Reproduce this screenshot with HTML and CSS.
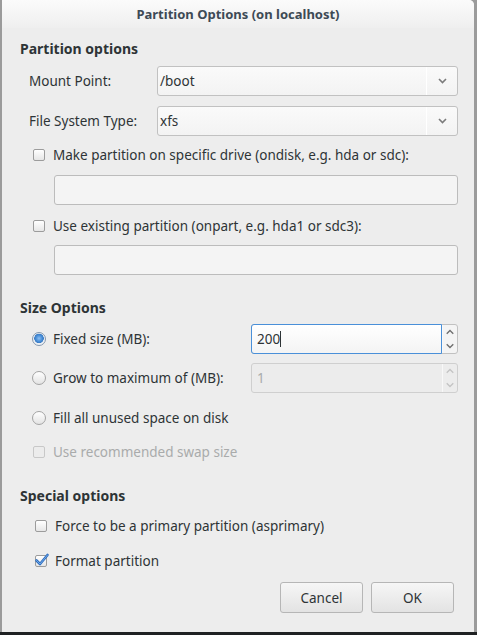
FILE: index.html
```html
<!DOCTYPE html>
<html lang="en">
<head>
    <meta charset="UTF-8">
    <meta name="viewport" content="width=device-width, initial-scale=1.0">
    <title>Partition Options</title>
    <link rel="stylesheet" href="styles.css">
</head>
<body>
    <div class="dialog">
        <div class="titlebar">Partition Options (on localhost)</div>

        <div class="content">
            <h2 class="section-title">Partition options</h2>

            <div class="field-row">
                <span class="field-label">Mount Point:</span>
                <div class="combo">
                    <span class="combo-text">/boot</span>
                    <span class="combo-button">
                        <svg width="9" height="6" viewBox="0 0 9 6"><path d="M1 1 L4.5 4.5 L8 1" fill="none" stroke="#7b7b7b" stroke-width="1.6"/></svg>
                    </span>
                </div>
            </div>

            <div class="field-row spaced">
                <span class="field-label">File System Type:</span>
                <div class="combo">
                    <span class="combo-text">xfs</span>
                    <span class="combo-button">
                        <svg width="9" height="6" viewBox="0 0 9 6"><path d="M1 1 L4.5 4.5 L8 1" fill="none" stroke="#7b7b7b" stroke-width="1.6"/></svg>
                    </span>
                </div>
            </div>

            <div class="check-row drive-check">
                <span class="checkbox"></span>
                <span>Make partition on specific drive (ondisk, e.g. hda or sdc):</span>
            </div>
            <div class="entry indented drive-entry"></div>

            <div class="check-row part-check">
                <span class="checkbox"></span>
                <span>Use existing partition (onpart, e.g. hda1 or sdc3):</span>
            </div>
            <div class="entry indented part-entry"></div>

            <h2 class="section-title size-title">Size Options</h2>

            <div class="option-row fixed-row">
                <div class="option-choice">
                    <span class="radio checked"></span>
                    <span>Fixed size (MB):</span>
                </div>
                <div class="spin focused">
                    <span class="spin-text">200<span class="caret"></span></span>
                    <span class="spin-buttons">
                        <svg width="15" height="14" viewBox="0 0 15 14"><path d="M4 9 L7.5 5.5 L11 9" fill="none" stroke="#6f6f6f" stroke-width="1.5"/></svg>
                        <svg width="15" height="14" viewBox="0 0 15 14"><path d="M4 5 L7.5 8.5 L11 5" fill="none" stroke="#6f6f6f" stroke-width="1.5"/></svg>
                    </span>
                </div>
            </div>

            <div class="option-row grow-row">
                <div class="option-choice">
                    <span class="radio"></span>
                    <span>Grow to maximum of (MB):</span>
                </div>
                <div class="spin disabled">
                    <span class="spin-text">1</span>
                    <span class="spin-buttons">
                        <svg width="15" height="14" viewBox="0 0 15 14"><path d="M4 9 L7.5 5.5 L11 9" fill="none" stroke="#c4c4c4" stroke-width="1.5"/></svg>
                        <svg width="15" height="14" viewBox="0 0 15 14"><path d="M4 5 L7.5 8.5 L11 5" fill="none" stroke="#c4c4c4" stroke-width="1.5"/></svg>
                    </span>
                </div>
            </div>

            <div class="option-row fill-row">
                <div class="option-choice">
                    <span class="radio"></span>
                    <span>Fill all unused space on disk</span>
                </div>
            </div>

            <div class="check-row swap-check disabled-text">
                <span class="checkbox disabled"></span>
                <span>Use recommended swap size</span>
            </div>

            <h2 class="section-title special-title">Special options</h2>

            <div class="check-row special-check primary-check">
                <span class="checkbox"></span>
                <span>Force to be a primary partition (asprimary)</span>
            </div>

            <div class="check-row special-check format-check">
                <span class="checkbox checked">
                    <svg width="16" height="16" viewBox="0 0 16 16"><path d="M2.5 8.5 L6 12 L13.5 3" fill="none" stroke="#2f6fc0" stroke-width="2.6" stroke-linecap="round" stroke-linejoin="round"/><path d="M2.5 8.5 L6 12 L13.5 3" fill="none" stroke="#6fa6e6" stroke-width="1" stroke-linecap="round" stroke-linejoin="round"/></svg>
                </span>
                <span>Format partition</span>
            </div>

            <div class="actions">
                <button class="btn">Cancel</button>
                <button class="btn">OK</button>
            </div>
        </div>
    </div>
</body>
</html>
```

FILE: styles.css
```css
body {
    margin: 0;
    background: linear-gradient(to bottom, #9b9b9b 632px, #1f2123 632px);
    font-family: 'Noto Sans', 'DejaVu Sans', sans-serif;
    font-size: 13.5px;
    color: #2e3436;
    height: 635px;
    overflow: hidden;
}
.dialog {
    width: 472px;
    height: 632px;
    margin-left: 2px;
    background-color: #ededed;
    border-top-right-radius: 5px;
    box-sizing: border-box;
}
.titlebar {
    height: 28px;
    line-height: 28px;
    text-align: center;
    font-weight: bold;
    font-size: 13px;
    color: #3d4a55;
    background: linear-gradient(to bottom, #fbfbfb, #efefef);
    border-top-right-radius: 5px;
}
.content {
    padding: 12px 16px 0 18px;
}
.section-title {
    margin: 0;
    font-size: 14px;
    line-height: 18px;
    font-weight: bold;
}
.size-title {
    margin-top: 24px;
}
.special-title {
    margin-top: 26px;
}

/* combo rows */
.field-row {
    display: flex;
    align-items: center;
    margin-top: 8px;
    height: 30px;
}
.field-row.spaced {
    margin-top: 10px;
}
.field-label {
    width: 128px;
    padding-left: 9px;
}
.combo {
    flex: 1;
    height: 30px;
    display: flex;
    box-sizing: border-box;
    border: 1px solid #c1c1c1;
    border-radius: 3px;
    background: linear-gradient(to bottom, #fafafa, #f3f3f3);
}
.combo-text {
    flex: 1;
    line-height: 28px;
    padding-left: 2px;
}
.combo-button {
    width: 30px;
    border-left: 1px solid #ffffff;
    display: flex;
    align-items: center;
    justify-content: center;
}

/* checkboxes and radios */
.check-row {
    display: flex;
    align-items: center;
    height: 18px;
    gap: 8px;
    padding-left: 13px;
}
.drive-check {
    margin-top: 10px;
}
.part-check {
    margin-top: 12px;
}
.swap-check {
    margin-top: 10px;
}
.special-check {
    padding-left: 15px;
}
.primary-check {
    margin-top: 12px;
}
.format-check {
    margin-top: 17px;
}
.disabled-text {
    color: #a9abab;
}
.checkbox {
    position: relative;
    width: 12px;
    height: 12px;
    box-sizing: border-box;
    border: 1px solid #9c9c9c;
    border-radius: 2px;
    background: linear-gradient(to bottom, #ffffff, #e6e6e6);
    flex-shrink: 0;
}
.checkbox.disabled {
    border-color: #c8c8c8;
    background: #ececec;
}
.checkbox svg {
    position: absolute;
    left: -2px;
    top: -4px;
}
.radio {
    width: 14px;
    height: 14px;
    box-sizing: border-box;
    border: 1px solid #a4a4a4;
    border-radius: 50%;
    background: linear-gradient(to bottom, #ffffff, #e3e3e3);
    flex-shrink: 0;
}
.radio.checked {
    border-color: #8497ad;
    background: radial-gradient(circle at 50% 45%, #8fc0f2 0, #4a90d9 3px, #3a7bc4 4.5px, #e9eef4 5px, #f6f6f6 7px);
}

/* entries */
.entry {
    height: 30px;
    box-sizing: border-box;
    border: 1px solid #bcbcbc;
    border-radius: 3px;
    background-color: #f4f4f4;
}
.indented {
    margin-left: 34px;
}
.drive-entry {
    margin-top: 11px;
}
.part-entry {
    margin-top: 10px;
}

/* size rows */
.option-row {
    display: flex;
    align-items: center;
    height: 30px;
}
.fixed-row {
    margin-top: 7px;
}
.grow-row {
    margin-top: 9px;
}
.fill-row {
    margin-top: 10px;
}
.option-choice {
    width: 219px;
    padding-left: 12px;
    display: flex;
    align-items: center;
    gap: 7px;
}
.spin {
    flex: 1;
    height: 30px;
    display: flex;
    box-sizing: border-box;
    border: 1px solid #c1c1c1;
    border-radius: 3px;
    background-color: #f4f4f4;
}
.spin-text {
    flex: 1;
    line-height: 28px;
    padding-left: 5px;
}
.spin.focused {
    border-color: #c1c1c1;
}
.spin.focused .spin-text {
    margin: -1px 0 -1px -1px;
    border: 1px solid #4a90d9;
    border-radius: 3px 0 0 3px;
    background: linear-gradient(to bottom, #ffffff, #f4f4f4);
}
.caret {
    display: inline-block;
    width: 1px;
    height: 16px;
    background-color: #2e3436;
    vertical-align: -3px;
}
.spin.disabled {
    border-color: #cfcfcf;
    background-color: #ececec;
    color: #a9abab;
}
.spin-buttons {
    width: 14px;
    display: flex;
    flex-direction: column;
    border-left: 1px solid #f8f8f8;
}
.spin-buttons svg {
    flex: 1;
    width: 14px;
}

/* buttons */
.actions {
    display: flex;
    justify-content: flex-end;
    gap: 8px;
    margin-top: 12px;
    padding-right: 4px;
}
.btn {
    width: 83px;
    height: 31px;
    font-family: inherit;
    font-size: 13.5px;
    color: #2e3436;
    border: 1px solid #b6b6b6;
    border-radius: 3px;
    background: linear-gradient(to bottom, #f6f6f6, #e3e3e3);
}
```
